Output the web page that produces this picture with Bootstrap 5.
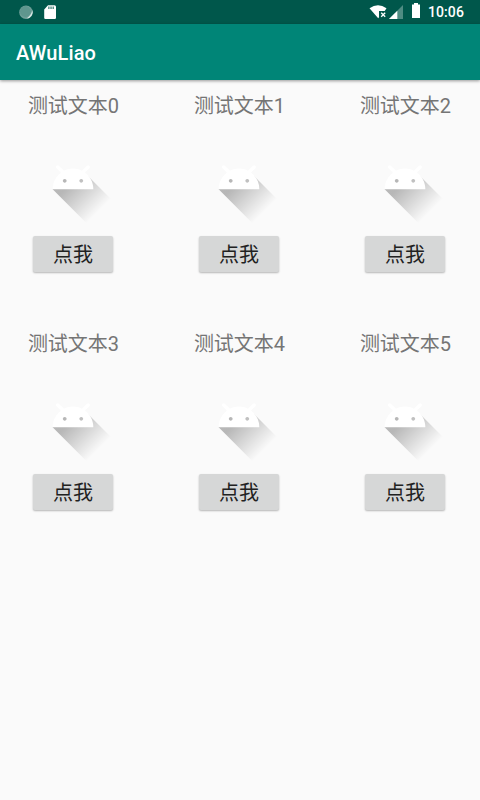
<!DOCTYPE html>
<html lang="zh-CN">
<head>
<meta charset="utf-8">
<meta name="viewport" content="width=device-width, initial-scale=1">
<title>AWuLiao</title>
<link href="https://cdn.jsdelivr.net/npm/bootstrap@5.3.0/dist/css/bootstrap.min.css" rel="stylesheet">
<style>
body{background:#fafafa;font-family:Roboto,"Noto Sans CJK SC",sans-serif;min-height:800px;overflow-x:hidden}
.status-bar{height:24px;background:#00574b;color:#fff;padding:0 16px 0 18px}
.clock{font-size:14px;font-weight:500;line-height:24px;margin-left:7px;letter-spacing:.1px}
.app-bar{height:56px;padding:2px 16px 0;background:#008577;box-shadow:0 1px 3px rgba(0,0,0,.4)}
.app-title{font-size:20px;font-weight:500;line-height:28px;color:#fff;letter-spacing:.1px}
.tiles{display:grid;grid-template-columns:repeat(3,146px);column-gap:20px;grid-auto-rows:238px}
.tile-label{font-size:20px;line-height:30px;color:#757575;height:39px;margin-top:11px;padding-left:1px}
.tile-btn{width:80px;height:36px;margin-top:6px;padding:2px 0 0;background:#d6d7d7;color:#212121;border:0;border-radius:2px;font-size:20px;line-height:34px;box-shadow:0 1px 2px rgba(0,0,0,.28)}
</style>
<script src="https://cdn.jsdelivr.net/npm/bootstrap@5.3.0/dist/js/bootstrap.bundle.min.js"></script>
</head>
<body>
<svg width="0" height="0" class="d-block" aria-hidden="true">
<defs>
<linearGradient id="fade" gradientUnits="userSpaceOnUse" x1="48.7653" y1="61.0927" x2="78.5885" y2="90.9159"><stop offset="0" stop-color="#000" stop-opacity=".267"/><stop offset="1" stop-color="#000" stop-opacity="0"/></linearGradient>
<symbol id="robot" viewBox="0 0 108 108">
<path fill="url(#fade)" d="M32,64C32,64 38.39,52.99 44.13,50.95C51.37,48.37 70.14,49.57 70.14,49.57L108.26,87.69L108,109.01L75.97,107.97L32,64Z"/>
<path fill="#fff" d="M66.94,46.02L66.94,46.02C72.44,50.07 76,56.61 76,64L32,64C32,56.61 35.56,50.11 40.98,46.06L36.18,41.19C35.45,40.45 35.45,39.3 36.18,38.56C36.91,37.81 38.05,37.81 38.78,38.56L44.25,44.05C47.18,42.57 50.46,41.71 54,41.71C57.48,41.71 60.78,42.57 63.68,44.05L69.11,38.56C69.84,37.81 70.98,37.81 71.71,38.56C72.44,39.3 72.44,40.45 71.71,41.19L66.94,46.02ZM62.94,56.92C64.08,56.92 65,56.01 65,54.88C65,53.76 64.08,52.85 62.94,52.85C61.8,52.85 60.88,53.76 60.88,54.88C60.88,56.01 61.8,56.92 62.94,56.92ZM45.06,56.92C46.2,56.92 47.13,56.01 47.13,54.88C47.13,53.76 46.2,52.85 45.06,52.85C43.92,52.85 43,53.76 43,54.88C43,56.01 43.92,56.92 45.06,56.92Z"/>
</symbol>
</defs>
</svg>
<div class="status-bar d-flex justify-content-between align-items-center">
<svg width="40" height="24" viewBox="18 0 40 24"><circle cx="26" cy="12.2" r="6.8" fill="#6f9f98"/><circle cx="25.4" cy="11.5" r="5.4" fill="#5f968e"/><path d="M26.5 18.6A6.6 6.6 0 0 0 32.4 10Q31.2 15.3 26.5 18.6Z" fill="#dce9e7"/><path fill="#fff" d="M48 5.3H54.5Q56 5.3 56 6.8V17.8Q56 19 54.8 19H45.4Q44.2 19 44.2 17.8V9.4Z"/><path fill="#00574b" fill-opacity=".65" d="M48.1 6.4h1.5v2.6h-1.5zM50.3 6.4h1.5v2.6h-1.5zM52.5 6.4h1.5v2.6h-1.5z"/></svg>
<div class="d-flex align-items-center">
<svg width="53" height="24" viewBox="368 0 53 24"><path fill="#fff" d="M369.5 8.2Q378 2.3 386.5 8.2L384.7 11H379V17.3L378.2 18.2Z"/><path d="M381.2 12.8L385.2 16.8M385.2 12.8L381.2 16.8" stroke="#fff" stroke-width="1.3"/><path fill="#4f8c83" d="M403 5V19H389Z"/><path fill="#fff" d="M397.3 10.7V19H389Z"/><path fill="#fff" d="M414 3h4v1.5h2V18h-8V4.5h2z"/></svg>
<span class="clock">10:06</span>
</div>
</div>
<header class="app-bar d-flex align-items-center"><h1 class="app-title mb-0">AWuLiao</h1></header>
<main class="tiles">
<section class="d-flex flex-column align-items-center"><div class="tile-label">测试文本0</div><svg width="100" height="100"><use href="#robot"/></svg><button class="btn tile-btn">点我</button></section>
<section class="d-flex flex-column align-items-center"><div class="tile-label">测试文本1</div><svg width="100" height="100"><use href="#robot"/></svg><button class="btn tile-btn">点我</button></section>
<section class="d-flex flex-column align-items-center"><div class="tile-label">测试文本2</div><svg width="100" height="100"><use href="#robot"/></svg><button class="btn tile-btn">点我</button></section>
<section class="d-flex flex-column align-items-center"><div class="tile-label">测试文本3</div><svg width="100" height="100"><use href="#robot"/></svg><button class="btn tile-btn">点我</button></section>
<section class="d-flex flex-column align-items-center"><div class="tile-label">测试文本4</div><svg width="100" height="100"><use href="#robot"/></svg><button class="btn tile-btn">点我</button></section>
<section class="d-flex flex-column align-items-center"><div class="tile-label">测试文本5</div><svg width="100" height="100"><use href="#robot"/></svg><button class="btn tile-btn">点我</button></section>
</main>
</body>
</html>
